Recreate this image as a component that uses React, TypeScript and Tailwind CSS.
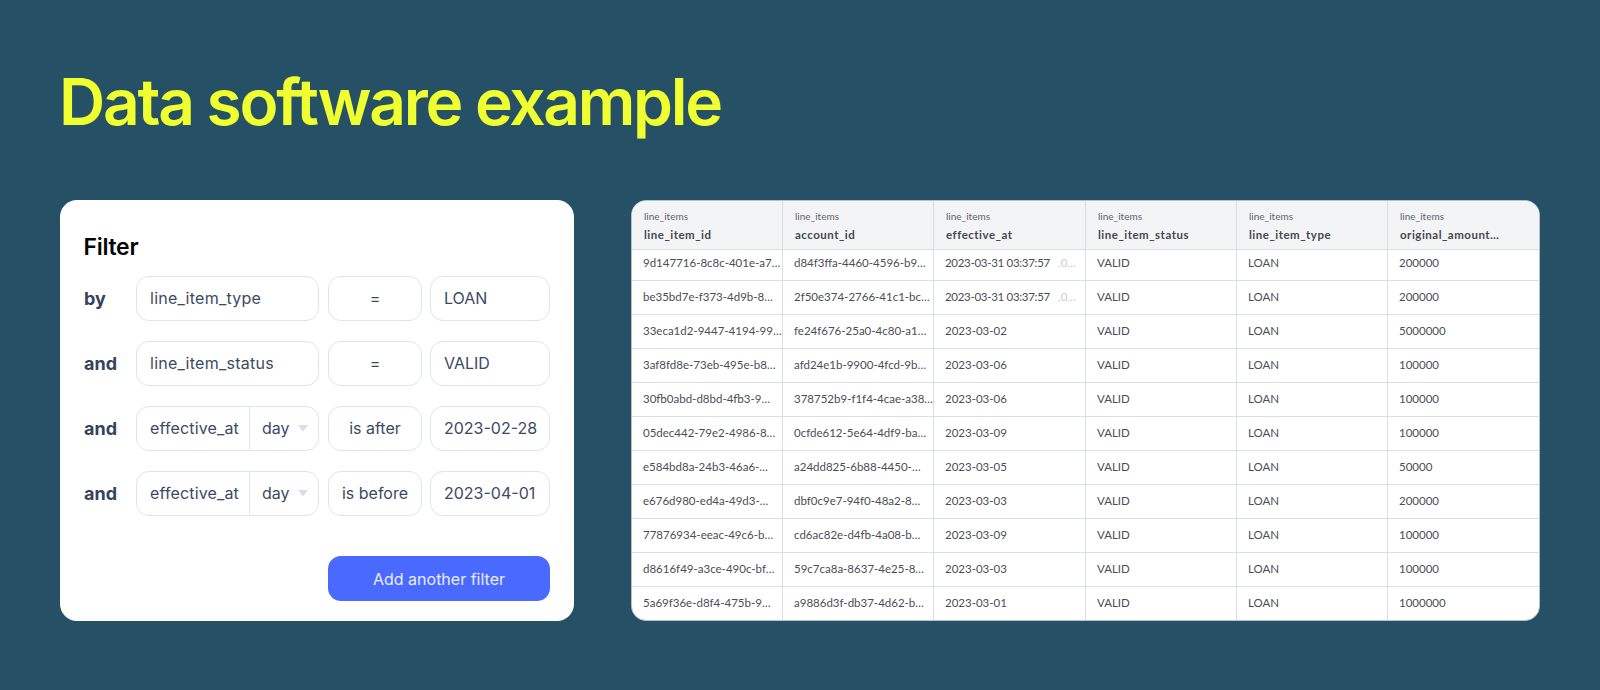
const filters = [
  { label: "by", field: "line_item_type", op: "=", value: "LOAN" },
  { label: "and", field: "line_item_status", op: "=", value: "VALID" },
  { label: "and", field: "effective_at", day: true, op: "is after", value: "2023-02-28" },
  { label: "and", field: "effective_at", day: true, op: "is before", value: "2023-04-01" },
];

const headers = ["line_item_id", "account_id", "effective_at", "line_item_status", "line_item_type", "original_amount…"];

const rows: [string, string, string, boolean, string][] = [
  ["9d147716-8c8c-401e-a7…", "d84f3ffa-4460-4596-b9…", "2023-03-31 03:37:57", true, "200000"],
  ["be35bd7e-f373-4d9b-8…", "2f50e374-2766-41c1-bc…", "2023-03-31 03:37:57", true, "200000"],
  ["33eca1d2-9447-4194-99…", "fe24f676-25a0-4c80-a1…", "2023-03-02", false, "5000000"],
  ["3af8fd8e-73eb-495e-b8…", "afd24e1b-9900-4fcd-9b…", "2023-03-06", false, "100000"],
  ["30fb0abd-d8bd-4fb3-9…", "378752b9-f1f4-4cae-a38…", "2023-03-06", false, "100000"],
  ["05dec442-79e2-4986-8…", "0cfde612-5e64-4df9-ba…", "2023-03-09", false, "100000"],
  ["e584bd8a-24b3-46a6-…", "a24dd825-6b88-4450-…", "2023-03-05", false, "50000"],
  ["e676d980-ed4a-49d3-…", "dbf0c9e7-94f0-48a2-8…", "2023-03-03", false, "200000"],
  ["77876934-eeac-49c6-b…", "cd6ac82e-d4fb-4a08-b…", "2023-03-09", false, "100000"],
  ["d8616f49-a3ce-490c-bf…", "59c7ca8a-8637-4e25-8…", "2023-03-03", false, "100000"],
  ["5a69f36e-d8f4-475b-9…", "a9886d3f-db37-4d62-b…", "2023-03-01", false, "1000000"],
];

const widths = ["w-[151px]", "w-[151px]", "w-[152px]", "w-[151px]", "w-[151px]", "flex-1"];

function Caret() {
  return (
    <svg width="12" height="8" viewBox="0 0 12 8" className="shrink-0">
      <path d="M1 1h10L6 7.5z" fill="#d5deec" />
    </svg>
  );
}

function Filter() {
  return (
    <div className="w-[514px] h-[421px] shrink-0 bg-white rounded-[17px] pl-6 pr-6 pt-[32px] font-['Inter',sans-serif] text-[#3c4a63]">
      <div className="-ml-[0.5px] text-[23px] leading-[30px] font-semibold text-[#050608] tracking-[-0.3px]">Filter</div>
      <div className="mt-[14px] flex flex-col gap-5">
        {filters.map((f, i) => (
          <div key={i} className="flex items-center h-[45px] text-base">
            <div className="w-[52px] font-bold text-[18px] text-[#36435c]">{f.label}</div>
            <div className="w-[183px] h-full flex border border-[#dde4f0] rounded-[13px] items-center">
              {f.day ? (
                <>
                  <div className="w-[113px] pl-[13px] pb-px h-full flex items-center border-r border-[#dde4f0] tracking-[0.15px]">{f.field}</div>
                  <div className="flex-1 pl-3 pr-[9px] pb-px flex items-center justify-between">
                    <span>day</span>
                    <Caret />
                  </div>
                </>
              ) : (
                <div className="pl-[13px] pb-px tracking-[0.25px]">{f.field}</div>
              )}
            </div>
            <div className="ml-[9px] w-[94px] h-full pb-px border border-[#dde4f0] rounded-[13px] flex items-center justify-center">{f.op}</div>
            <div className="ml-2 w-[120px] h-full pb-px border border-[#dde4f0] rounded-[13px] flex items-center pl-[13px]">{f.value}</div>
          </div>
        ))}
      </div>
      <div className="mt-10 flex justify-end">
        <div className="w-[222px] h-[45px] rounded-[13px] bg-[#4a6aff] text-[#e8edff] text-base flex items-center justify-center">Add another filter</div>
      </div>
    </div>
  );
}

function Table() {
  return (
    <div className="flex-1 h-[421px] bg-white rounded-[15px] overflow-hidden border border-[#b4c0d0] font-['Lato',sans-serif] text-[#4b4e55]">
      <div className="flex h-[49px] bg-[#f3f4f6] border-b border-[#d9dde4]">
        {headers.map((h, i) => (
          <div key={h} className={`${widths[i]} ${i < 5 ? "border-r border-[#d9dde4]" : ""} pl-3 pt-[9px]`}>
            <div className="text-[10px] leading-3 text-[#62656c]">line_items</div>
            <div className="mt-[5px] text-[11.5px] leading-4 font-bold text-[#45484f] tracking-[0.5px]">{h}</div>
          </div>
        ))}
      </div>
      {rows.map((r, idx) => {
        const cells = [r[0], r[1], r[2], "VALID", "LOAN", r[4]];
        const last = idx === rows.length - 1;
        return (
          <div key={idx} className={`flex ${idx === 0 ? "h-[31px]" : last ? "h-[33px]" : "h-[34px]"} ${last ? "" : "border-b border-[#d9dde4]"}`}>
            {cells.map((c, i) => (
              <div key={i} className={`${widths[i]} h-full ${idx === 0 ? "pt-[5px]" : "flex items-center pb-[2px]"} ${i < 5 ? "border-r border-[#d9dde4]" : ""} pl-[11px] text-[11.5px] leading-4 whitespace-nowrap overflow-hidden`}>
                <span className={i === 2 && r[3] ? "tracking-[-0.3px]" : ""}>{c}</span>
                {i === 2 && r[3] ? <span className="ml-[8px] text-[#c9cbd0]">.0…</span> : null}
              </div>
            ))}
          </div>
        );
      })}
    </div>
  );
}

export default function App() {
  return (
    <div className="w-[1600px] h-[690px] bg-[#265066] pl-[60px] pr-[60px] pt-[62px] overflow-hidden">
      <h1 className="-ml-px font-['Inter',sans-serif] text-[64px] leading-[80px] font-semibold tracking-[-2.25px] text-[#efff2f]">Data software example</h1>
      <div className="mt-[58px] flex gap-[57px]">
        <Filter />
        <Table />
      </div>
    </div>
  );
}
